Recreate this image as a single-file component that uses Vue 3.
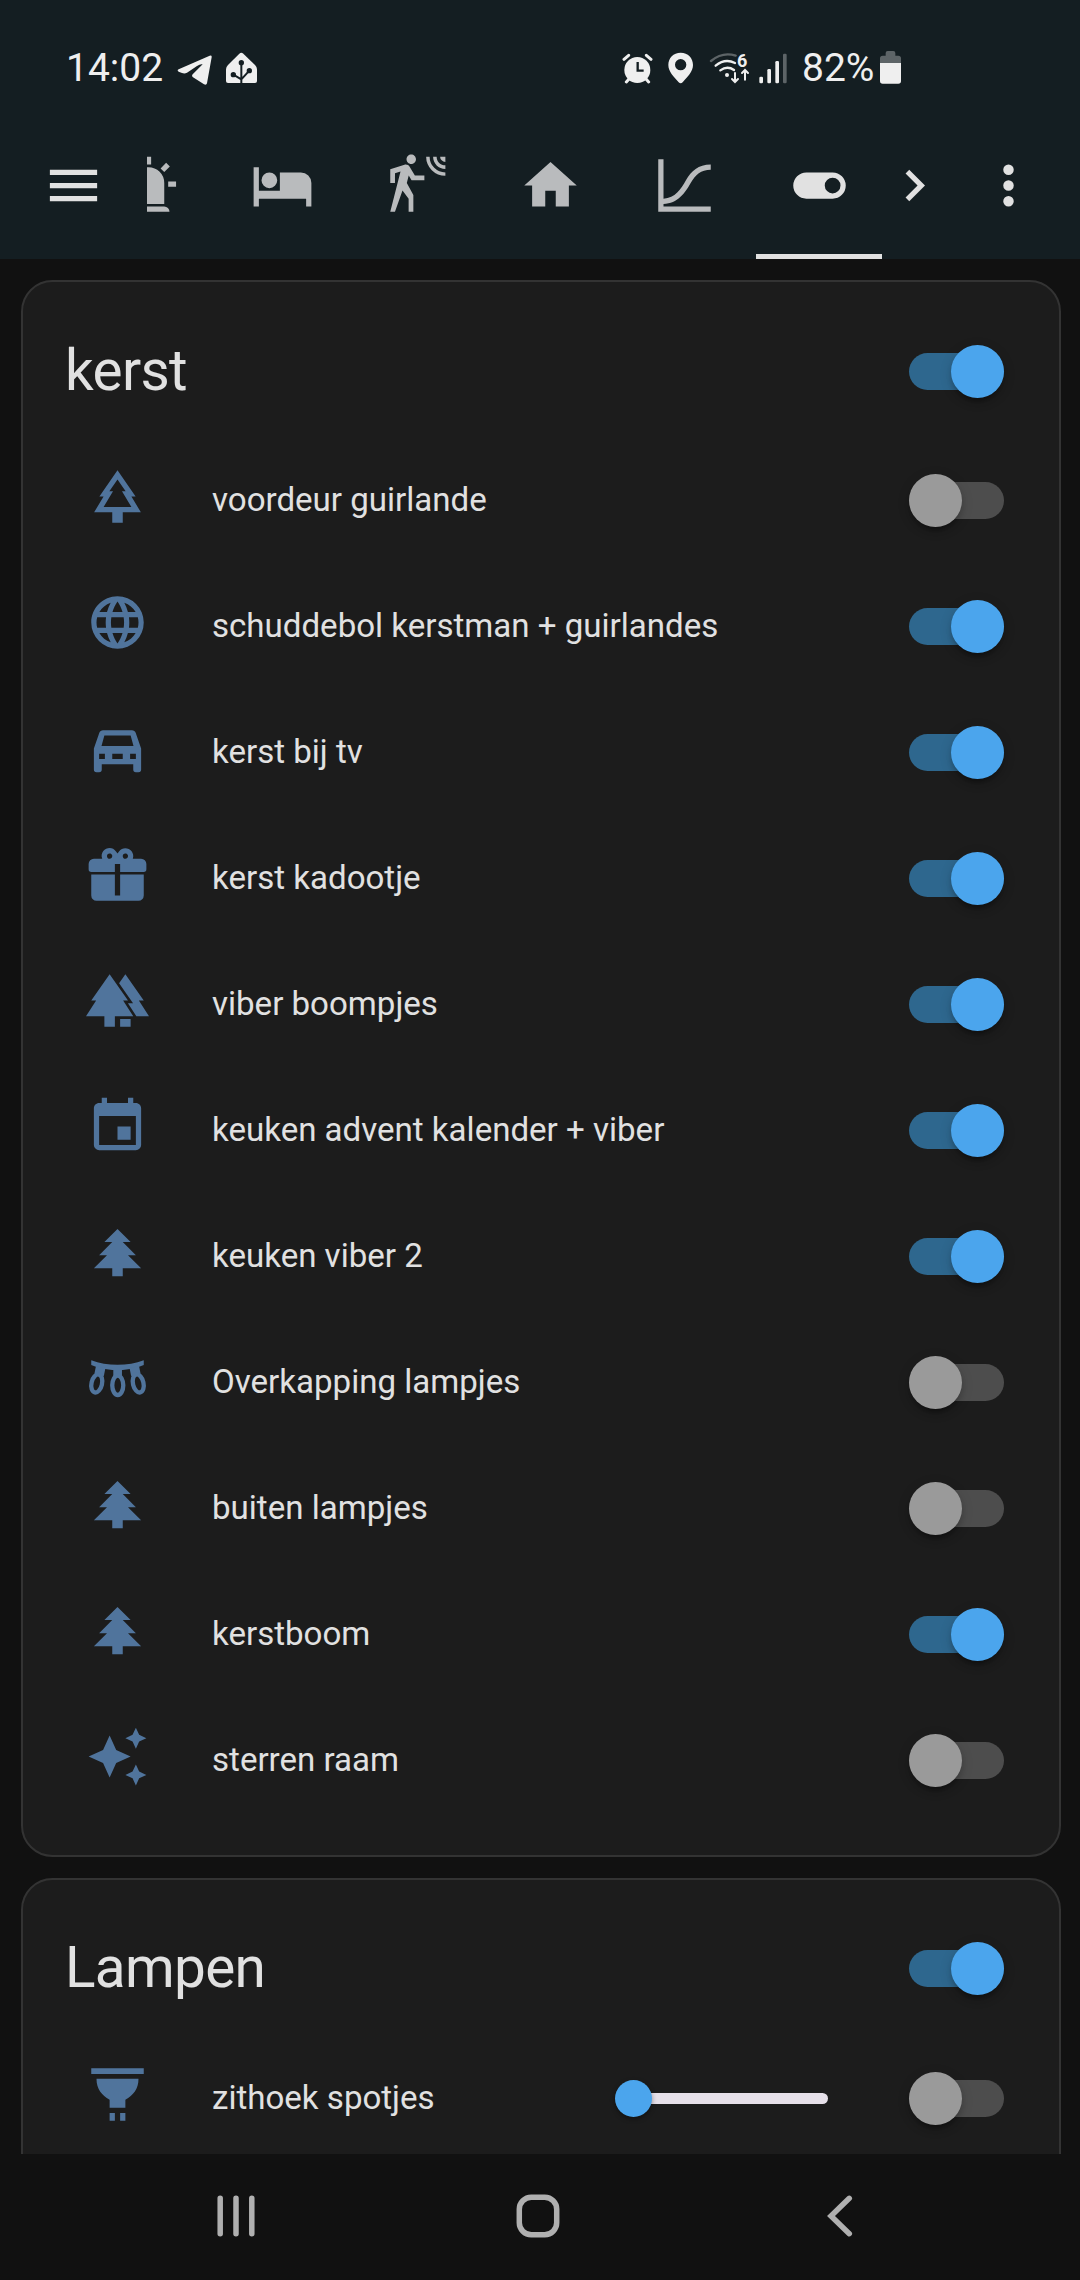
<script setup>
const tabs = [
  { name: 'alarm', d: 'M6,6.9L3.87,4.78L5.28,3.37L7.4,5.5L6,6.9M13,1V4H11V1H13M20.13,4.78L18,6.9L16.6,5.5L18.72,3.37L20.13,4.78M4.5,10.5V12.5H1.5V10.5H4.5M19.5,10.5H22.5V12.5H19.5V10.5M6,20H18A2,2 0 0,1 20,22H4A2,2 0 0,1 6,20M12,5A6,6 0 0,1 18,11V19H6V11A6,6 0 0,1 12,5Z' },
  { name: 'bed', d: 'M19,7H11V14H3V5H1V20H3V17H21V20H23V11A4,4 0 0,0 19,7M7,13A3,3 0 0,0 10,10A3,3 0 0,0 7,7A3,3 0 0,0 4,10A3,3 0 0,0 7,13Z' },
  { name: 'motion', d: 'M10,0.2C9,0.2 8.2,1 8.2,2C8.2,3 9,3.8 10,3.8C11,3.8 11.8,3 11.8,2C11.8,1 11,0.2 10,0.2M15.67,1A7.33,7.33 0 0,0 23,8.33V7A6,6 0 0,1 17,1H15.67M18.33,1C18.33,3.58 20.42,5.67 23,5.67V4.33C21.16,4.33 19.67,2.84 19.67,1H18.33M21,1A2,2 0 0,0 23,3V1H21M7.92,4.03C7.75,4.03 7.58,4.06 7.42,4.11L2,5.8V11H3.8V7.33L5.91,6.67L2,22H3.8L6.67,13.89L9,17V22H10.8V15.59L8.31,11.05L9.04,8.18L10.12,10H15V8.2H11.38L9.38,4.87C9.08,4.37 8.54,4.03 7.92,4.03Z' },
  { name: 'home', d: 'M10,20V14H14V20H19V12H22L12,3L2,12H5V20H10Z' },
  { name: 'chart', d: 'M2,2H4V17C8.5,16.8 10.6,13.4 12.6,9.9C14.6,6.5 17.2,4 22,4V6C18.2,6 16.2,7.9 14.3,11.1C12.2,14.8 9.4,18.8 4,19V20H22V22H2Z' },
  { name: 'switches', active: true, d: 'M17,7H7A5,5 0 0,0 2,12A5,5 0 0,0 7,17H17A5,5 0 0,0 22,12A5,5 0 0,0 17,7M17,15A3,3 0 0,1 14,12A3,3 0 0,1 17,9A3,3 0 0,1 20,12A3,3 0 0,1 17,15Z' },
]

const pine = 'M10,21V18H3L8,13H5L10,8H7L12,3L17,8H14L19,13H16L21,18H14V21H10Z'

const cards = [
  {
    title: 'kerst',
    on: true,
    rows: [
      { label: 'voordeur guirlande', on: false, d: 'M12,2L18.9,12H17.3L20.9,18H14V22H10V18H3.1L6.7,12H5.1ZM12,5.5L8.9,10H10.3L6.7,16H17.3L13.7,10H15.1Z' },
      { label: 'schuddebol kerstman + guirlandes', on: true, d: 'M16.36,14C16.44,13.34 16.5,12.68 16.5,12C16.5,11.32 16.44,10.66 16.36,10H19.74C19.9,10.64 20,11.31 20,12C20,12.69 19.9,13.36 19.74,14M14.59,19.56C15.19,18.45 15.65,17.25 15.97,16H18.92C17.96,17.65 16.43,18.93 14.59,19.56M14.34,14H9.66C9.56,13.34 9.5,12.68 9.5,12C9.5,11.32 9.56,10.65 9.66,10H14.34C14.43,10.65 14.5,11.32 14.5,12C14.5,12.68 14.43,13.34 14.34,14M12,19.96C11.17,18.76 10.5,17.43 10.09,16H13.91C13.5,17.43 12.83,18.76 12,19.96M8,8H5.08C6.03,6.34 7.57,5.06 9.4,4.44C8.8,5.55 8.35,6.75 8,8M5.08,16H8C8.35,17.25 8.8,18.45 9.4,19.56C7.57,18.93 6.03,17.65 5.08,16M4.26,14C4.1,13.36 4,12.69 4,12C4,11.31 4.1,10.64 4.26,10H7.64C7.56,10.66 7.5,11.32 7.5,12C7.5,12.68 7.56,13.34 7.64,14M12,4.03C12.83,5.23 13.5,6.57 13.91,8H10.09C10.5,6.57 11.17,5.23 12,4.03M18.92,8H15.97C15.65,6.75 15.19,5.55 14.59,4.44C16.43,5.07 17.96,6.34 18.92,8M12,2C6.47,2 2,6.5 2,12A10,10 0 0,0 12,22A10,10 0 0,0 22,12A10,10 0 0,0 12,2Z' },
      { label: 'kerst bij tv', on: true, d: 'M18.92,6C18.72,5.42 18.16,5 17.5,5H6.5C5.84,5 5.29,5.42 5.08,6L3,12V20A1,1 0 0,0 4,21H5A1,1 0 0,0 6,20V18H18V20A1,1 0 0,0 19,21H20A1,1 0 0,0 21,20V12L18.92,6ZM7,7H17L18.1,11H5.9ZM5,14H7.2V16H5ZM10,14H14V16H10ZM16.8,14H19V16H16.8Z' },
      { label: 'kerst kadootje', on: true, d: 'M9.06,1.93C7.17,1.92 5.33,3.74 6.17,6H3A2,2 0 0,0 1,8V10A1,1 0 0,0 2,11H11V8H13V11H22A1,1 0 0,0 23,10V8A2,2 0 0,0 21,6H17.83C19,2.73 14.6,.42 12.57,3.24L12,4L11.43,3.22C10.8,2.33 9.93,1.94 9.06,1.93M9,4C9.89,4 10.34,5.08 9.71,5.71C9.08,6.34 8,5.89 8,5A1,1 0 0,1 9,4M15,4C15.89,4 16.34,5.08 15.71,5.71C15.08,6.34 14,5.89 14,5A1,1 0 0,1 15,4M2,12V20A2,2 0 0,0 4,22H20A2,2 0 0,0 22,20V12H13V20H11V12H2Z' },
      { label: 'viber boompjes', on: true, d: 'M16,12L9,2L2,12H3.86L0,18H7V22H11V18H18L14.14,12H16M20.14,12H22L15,2L12.61,5.41L17.92,13H15.97L19.19,18H24L20.14,12M13,19H17V22H13V19Z' },
      { label: 'keuken advent kalender + viber', on: true, d: 'M19,19H5V8H19M16,1V3H8V1H6V3H5C3.89,3 3,3.89 3,5V19A2,2 0 0,0 5,21H19A2,2 0 0,0 21,19V5C21,3.89 20.1,3 19,3H18V1M17,12H12V17H17V12Z' },
      { label: 'keuken viber 2', on: true, d: pine },
      { label: 'Overkapping lampjes', on: false, lights: true },
      { label: 'buiten lampjes', on: false, d: pine },
      { label: 'kerstboom', on: true, d: pine },
      { label: 'sterren raam', on: false, d: 'M19,1L17.74,3.75L15,5L17.74,6.26L19,9L20.25,6.26L23,5L20.25,3.75M9,4L6.5,9.5L1,12L6.5,14.5L9,20L11.5,14.5L17,12L11.5,9.5M19,15L17.74,17.74L15,19L17.74,20.25L19,23L20.25,20.25L23,19L20.25,17.74' },
    ],
  },
  {
    title: 'Lampen',
    on: true,
    rows: [
      { label: 'zithoek spotjes', on: false, slider: true, d: 'M2,2H22V4.2H2ZM4,6H20C20,10 18,12.2 15,14V17H9V14C6,12.2 4,10 4,6ZM9,19H11V22H9ZM13,19H15V22H13Z' },
    ],
  },
]
</script>

<template>
  <div class="screen">
    <header class="top">
      <div class="status">
        <span class="clock">14:02</span>
        <svg class="telegram" viewBox="410 70 108 96" width="36" height="32">
          <path d="M415 116L508 75Q515 73 514 80L500 158Q498 165 491 161L458 140Q453 136 457 131L487 101Q480 99 470 106L440 126Q433 130 425 127L415 123Q409 119 415 116Z" />
        </svg>
        <svg class="ha" viewBox="555 66 99 96" width="33" height="32">
          <path d="M598 71Q604 66 610 71L645 105Q651 111 651 118V153Q651 159 645 159H564Q558 159 558 153V118Q558 111 564 105Z" />
          <g class="cut">
            <path d="M604 99V160M604 148L580 134M604 148L628 122" />
            <circle cx="604" cy="98" r="5" /><circle cx="580" cy="134" r="5" /><circle cx="628" cy="122" r="5" />
          </g>
        </svg>
        <span class="spacer"></span>
        <svg class="alarm" viewBox="63 68 93 93" width="31" height="31">
          <circle cx="109" cy="119" r="39" />
          <path class="line" d="M69 87L83 75M150 87L136 75M76 155L84 146M143 155L135 146" />
          <path class="dark" d="M110 95V121H128" />
        </svg>
        <svg class="pin" viewBox="203 67 78 96" width="26" height="32">
          <path fill-rule="evenodd" d="M241 69C219 69 204 85 204 106C204 126 221 142 235 158Q241 164 247 158C261 142 278 126 278 106C278 85 263 69 241 69ZM241 88A17 17 0 1 1 241 122A17 17 0 1 1 241 88Z" />
        </svg>
        <div class="wifi">
          <svg viewBox="327 66 126 96" width="42" height="32">
            <path class="arc dim" d="M333 93Q368 64 407 77" />
            <path class="arc" d="M347 107Q375 84 405 99M361 121Q382 106 402 120" />
            <circle cx="381" cy="135" r="6" />
            <path class="arrow" d="M405 129V155M396 147L405 156L414 147M435 149V121M426 129L435 120L444 129" />
          </svg>
          <span>6</span>
        </div>
        <svg class="signal" viewBox="477 66 87 93" width="29" height="31">
          <rect x="478" y="137" width="11" height="20" rx="4" />
          <rect x="502" y="114" width="11" height="43" rx="4" />
          <rect x="526" y="90" width="11" height="67" rx="4" />
          <rect class="faint" x="549" y="68" width="11" height="89" rx="4" />
        </svg>
        <span class="percent">82%</span>
        <svg class="battery" viewBox="840 63 63 99" width="21" height="33">
          <path class="faint" d="M840 100V85Q840 77 848 77H857V69Q857 63 863 63H880Q886 63 886 69V77H895Q903 77 903 85V100Z" />
          <path d="M840 99H903V153Q903 161 895 161H848Q840 161 840 153Z" />
        </svg>
      </div>

      <div class="toolbar">
        <svg class="icon menu" viewBox="0 0 24 24"><path d="M3,6H21V8H3V6M3,11H21V13H3V11M3,16H21V18H3V16Z" /></svg>
        <nav class="tabs">
          <div v-for="t in tabs" :key="t.name" class="tab" :class="{ active: t.active }">
            <svg class="icon" viewBox="0 0 24 24"><path :d="t.d" /></svg>
          </div>
        </nav>
        <svg class="icon next" viewBox="0 0 24 24"><path d="M8.59,16.58L13.17,12L8.59,7.41L10,6L16,12L10,18L8.59,16.58Z" /></svg>
        <svg class="icon more" viewBox="0 0 24 24"><path d="M12,16A2,2 0 0,1 14,18A2,2 0 0,1 12,20A2,2 0 0,1 10,18A2,2 0 0,1 12,16M12,10A2,2 0 0,1 14,12A2,2 0 0,1 12,14A2,2 0 0,1 10,12A2,2 0 0,1 12,10M12,4A2,2 0 0,1 14,6A2,2 0 0,1 12,8A2,2 0 0,1 10,6A2,2 0 0,1 12,4Z" /></svg>
      </div>
    </header>

    <main class="content">
      <section v-for="c in cards" :key="c.title" class="card">
        <div class="head">
          <h1>{{ c.title }}</h1>
          <span class="switch" :class="{ on: c.on }"><i></i></span>
        </div>
        <div v-for="r in c.rows" :key="r.label" class="row">
          <svg class="icon" viewBox="0 0 24 24">
            <path v-if="!r.lights" fill-rule="evenodd" :d="r.d" />
            <template v-else>
              <path d="M2,5C8,7.3 16,7.3 22,5V6.9C20.5,7.5 19,8 17.5,8.3L14,8.8H10L6.5,8.3C5,8 3.5,7.5 2,6.9Z" />
              <path d="M10.4,8H13.7V11.4H10.4ZM3.8,7.2L7.4,8L6.8,11L3.2,10.2ZM20.2,7.2L16.6,8L17.2,11L20.8,10.2Z" />
              <g class="bulbs">
                <ellipse cx="12.1" cy="14.6" rx="2.1" ry="3.7" />
                <ellipse cx="4.1" cy="13.9" rx="2" ry="3.5" transform="rotate(13 4.1 13.9)" />
                <ellipse cx="19.9" cy="13.9" rx="2" ry="3.5" transform="rotate(-13 19.9 13.9)" />
              </g>
            </template>
          </svg>
          <span class="label">{{ r.label }}</span>
          <span v-if="r.slider" class="slider"><i></i></span>
          <span class="switch" :class="{ on: r.on }"><i></i></span>
        </div>
      </section>
    </main>

    <footer class="navbar">
      <svg viewBox="0 0 38 42" width="38" height="42"><path d="M3.2 3.2V38.8M19 3.2V38.8M34.8 3.2V38.8" /></svg>
      <svg class="home" viewBox="0 0 44 44" width="44" height="44"><rect x="3.3" y="3.3" width="37.4" height="37.4" rx="12" /></svg>
      <svg viewBox="0 0 26 42" width="26" height="42"><path d="M22.3 3.3L4 21L22.3 38.7" /></svg>
    </footer>
  </div>
</template>

<style>
body {
  margin: 0;
  background: #111;
}
</style>

<style scoped>
.screen {
  width: 1080px;
  height: 2280px;
  display: flex;
  flex-direction: column;
  overflow: hidden;
  background: #111;
  color: #e1e1e1;
  font-family: Roboto, "Liberation Sans", sans-serif;
}
svg {
  display: block;
  flex: none;
  fill: currentColor;
}
.icon {
  width: 63px;
  height: 63px;
}
.top {
  height: 259px;
  flex: none;
  background: #141e22;
}

/* status bar */
.status {
  height: 112px;
  padding: 24px 179px 0 66px;
  box-sizing: border-box;
  display: flex;
  align-items: center;
  color: #efefef;
  font-size: 39px;
  line-height: 46px;
}
.clock {
  width: 111px;
  margin-top: -1px;
}
.telegram {
  margin-top: 3px;
}
.ha {
  margin-left: 12px;
}
.spacer {
  flex: 1;
}
.alarm {
  margin-right: 15px;
}
.pin {
  margin-right: 15px;
}
.wifi {
  position: relative;
  margin-right: 8px;
}
.wifi span {
  position: absolute;
  left: 28px;
  top: -2px;
  font-size: 18px;
  font-weight: 700;
  line-height: 22px;
}
.signal {
  margin-right: 14px;
}
.percent {
  width: 78px;
  margin-top: -1px;
}
.battery {
  margin-top: -1px;
}
.cut {
  fill: #141e22;
  stroke: #141e22;
  stroke-width: 6;
}
.cut path {
  fill: none;
}
.line {
  stroke: currentColor;
  stroke-width: 9;
  stroke-linecap: round;
}
.dark {
  fill: none;
  stroke: #141e22;
  stroke-width: 7;
}
.arc,
.arrow {
  fill: none;
  stroke: currentColor;
  stroke-width: 7;
  stroke-linecap: round;
}
.arrow {
  stroke-width: 6;
}
.dim {
  stroke: #5d6467;
}
.faint {
  fill: #5d6467;
}

/* view tabs */
.toolbar {
  height: 147px;
  display: flex;
  align-items: center;
}
.menu {
  margin-left: 42px;
}
.tabs {
  width: 735px;
  height: 147px;
  margin-left: 42px;
  display: flex;
  justify-content: flex-end;
  overflow: hidden;
}
.tab {
  width: 126px;
  margin-left: 8.2px;
  flex: none;
  display: flex;
  align-items: center;
  justify-content: center;
  box-sizing: border-box;
  border-top: 5px solid transparent;
  border-bottom: 5px solid transparent;
  color: #b9bbbd;
}
.tab.active {
  color: #e1e1e1;
  border-bottom-color: #e1e1e1;
}
.next {
  margin-left: 1px;
}
.more {
  margin-left: 31px;
}

/* cards */
.content {
  flex: none;
  height: 1895px;
  box-sizing: border-box;
  padding: 21px 19px 0 21px;
  display: flex;
  flex-direction: column;
  gap: 20.6px;
  overflow: hidden;
}
.card {
  flex: none;
  box-sizing: border-box;
  border: 2px solid #333;
  border-radius: 31.5px;
  background: #1c1c1c;
  padding: 0 55px 31.5px 42px;
}
.head {
  height: 155.5px;
  padding-bottom: 1px;
  box-sizing: border-box;
  display: flex;
  align-items: center;
  justify-content: space-between;
}
.head .switch {
  margin-top: 24px;
}
h1 {
  margin: 23px 0 0;
  font-size: 56.7px;
  font-weight: 400;
  line-height: 84px;
  letter-spacing: -0.012em;
}
.row {
  height: 126px;
  display: flex;
  align-items: center;
}
.row .icon {
  margin: -8px 0 0 21px;
  color: #50749c;
}
.bulbs {
  fill: none;
  stroke: currentColor;
  stroke-width: 1.65;
}
.label {
  flex: 1;
  margin: -1px 0 0 63px;
  font-size: 33.075px;
  line-height: 52px;
  white-space: nowrap;
}
.switch {
  width: 95px;
  height: 37px;
  flex: none;
  display: flex;
  align-items: center;
  border-radius: 18.5px;
  background: #4d4d4d;
}
.switch i {
  width: 53px;
  height: 53px;
  flex: none;
  border-radius: 50%;
  background: #9a9a9a;
  box-shadow: 0 8px 3px -5px rgba(0, 0, 0, 0.2), 0 5px 5px rgba(0, 0, 0, 0.14), 0 3px 13px rgba(0, 0, 0, 0.12);
}
.switch.on {
  justify-content: flex-end;
  background: #2e678e;
}
.switch.on i {
  background: #4ba5ed;
}
.slider {
  width: 195px;
  height: 11px;
  margin-right: 81px;
  display: flex;
  align-items: center;
  border-radius: 5.5px;
  background: #e6e0e9;
}
.slider i {
  width: 37px;
  height: 37px;
  margin-left: -18px;
  flex: none;
  border-radius: 50%;
  background: #4ba5ed;
  box-shadow: 0 2px 5px rgba(0, 0, 0, 0.4);
}

/* system navigation */
.navbar {
  flex: 1;
  padding: 0 227px 3px 217px;
  display: flex;
  align-items: center;
  justify-content: space-between;
  color: #b0b0b0;
}
.navbar svg {
  fill: none;
  stroke: currentColor;
  stroke-width: 5.5;
  stroke-linecap: round;
}
.navbar .home {
  margin-right: 7px;
}
</style>
